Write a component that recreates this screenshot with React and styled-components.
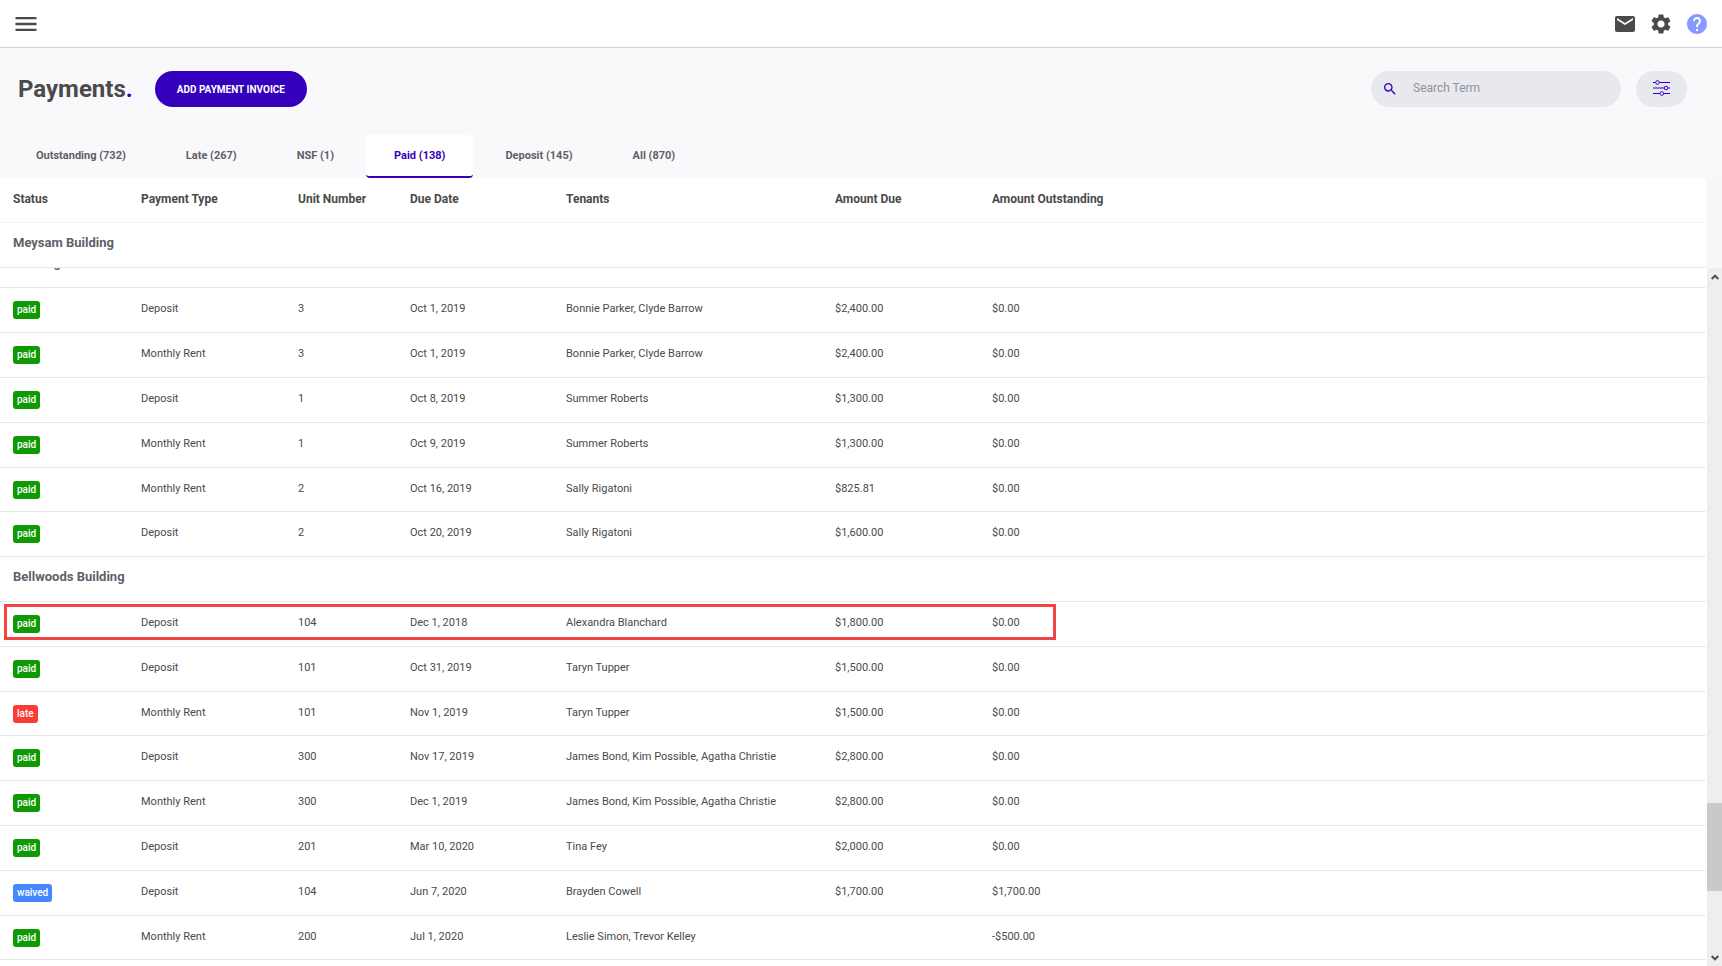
import React, { useLayoutEffect, useRef, useState } from "react";
import styled, { createGlobalStyle } from "styled-components";
import { MdMenu, MdEmail, MdSettings, MdHelp, MdSearch } from "react-icons/md";

const GlobalStyle = createGlobalStyle`
  *, *::before, *::after { box-sizing: border-box; }
  body {
    margin: 0;
    background: #fff;
    color: #4a4a4a;
    font-family: Roboto, "Liberation Sans", sans-serif;
    font-size: 11px;
  }
  button, input { font: inherit; color: inherit; }
`;

const Shell = styled.div`
  display: flex;
  flex-direction: column;
  height: 100vh;
  overflow: hidden;
`;

const TopBar = styled.header`
  display: flex;
  flex: none;
  align-items: center;
  justify-content: space-between;
  height: 48px;
  padding: 0 13px 0 12px;
  border-bottom: 1px solid #d0d0d0;
`;

const IconGroup = styled.div`
  display: flex;
  gap: 12px;
`;

const IconButton = styled.button`
  display: flex;
  padding: 0;
  border: 0;
  background: none;
  color: ${(p) => (p.$accent ? "#859cff" : "#4a4a4a")};
  cursor: pointer;
`;

const PageHead = styled.section`
  flex: none;
  background: #f9f9fc;
`;

const TitleRow = styled.div`
  display: flex;
  align-items: center;
  height: 87px;
  padding: 0 35px 5px 18px;
`;

const Title = styled.h1`
  margin: 0 22px 0 0;
  font-size: 24px;
  line-height: 28px;
  font-weight: 700;
`;

const Dot = styled.span`
  color: #3400bd;
`;

const AddButton = styled.button`
  height: 36px;
  padding: 0 22px;
  border: 0;
  border-radius: 18px;
  background: #3400bd;
  color: #fff;
  font-size: 10px;
  font-weight: 700;
  cursor: pointer;
`;

const SearchBox = styled.label`
  display: flex;
  align-items: center;
  gap: 15px;
  width: 250px;
  height: 36px;
  margin-left: auto;
  padding: 0 12px 0 11px;
  border-radius: 18px;
  background: #e8e9ee;
  color: #3400bd;
`;

const SearchInput = styled.input`
  flex: 1;
  min-width: 0;
  padding: 0 0 2px;
  border: 0;
  outline: 0;
  background: none;
  color: #4a4a4a;
  font-size: 12px;
  &::placeholder { color: #929297; opacity: 1; }
`;

const FilterButton = styled.button`
  display: flex;
  align-items: center;
  justify-content: center;
  width: 51px;
  height: 36px;
  margin-left: 15px;
  padding: 0 0 2px;
  border: 0;
  border-radius: 18px;
  background: #e8e9ee;
  color: #3400bd;
  cursor: pointer;
`;

const Tabs = styled.nav`
  display: flex;
  gap: 4px;
  padding-left: 8px;
`;

const Tab = styled.button`
  height: 43px;
  padding: 0 28px;
  border: 0;
  border-bottom: 2px solid ${(p) => (p.$active ? "#3400bd" : "transparent")};
  border-radius: 4px;
  background: ${(p) => (p.$active ? "#fff" : "transparent")};
  color: ${(p) => (p.$active ? "#3400bd" : "#5f5f68")};
  font-size: 11px;
  font-weight: 700;
  cursor: pointer;
`;

const HeadStrip = styled.div`
  flex: none;
  padding-right: 16px;
  background: #f7f7f7;
`;

const Body = styled.div`
  display: flex;
  flex: 1;
  min-height: 0;
`;

const ScrollPane = styled.div`
  flex: 1;
  min-width: 0;
  margin-right: 1px;
  padding-bottom: 40px;
  overflow: hidden;
`;

const Table = styled.table`
  width: 100%;
  table-layout: fixed;
  border-spacing: 0;
  background: #fff;
`;

const Col = styled.col`
  width: ${(p) => p.$width};
`;

const Row = styled.tr`
  position: relative;
  height: 45px;
  tbody > &:nth-child(5n + 6) { height: 44px; }
`;

const Cell = styled.td`
  padding: 0 0 2px 13px;
  border-bottom: 1px solid #e9e9e9;
  line-height: 16px;
  white-space: nowrap;
`;

const StatusCell = styled(Cell)`
  padding-bottom: 0;
`;

const HeadCell = styled.th`
  padding: 0 0 2px 13px;
  border-bottom: 1px solid #f3f3f8;
  font-size: 12px;
  font-weight: 700;
  line-height: 16px;
  text-align: left;
  white-space: nowrap;
`;

const GroupCell = styled.th`
  padding: 0 0 4px 13px;
  border-bottom: 1px solid #e9e9e9;
  color: #5f5f68;
  font-size: 13px;
  font-weight: 700;
  line-height: 18px;
  text-align: left;
`;

const badgeColors = { paid: "#0f9a04", late: "#fb3b36", waived: "#4488ff" };

const Badge = styled.span`
  display: inline-block;
  height: 18px;
  padding: 0 4px;
  border-radius: 3px;
  background: ${(p) => badgeColors[p.$status]};
  color: #fff;
  font-size: 10px;
  font-weight: 500;
  line-height: 18px;
  vertical-align: middle;
`;

const Outline = styled.span`
  position: absolute;
  top: 2px;
  left: 4px;
  width: 1052px;
  height: 36px;
  border: 3px solid #f24444;
  pointer-events: none;
`;

const Track = styled.div`
  display: flex;
  flex: none;
  flex-direction: column;
  width: 15px;
  background: #eee;
`;

const TrackArrow = styled.button`
  display: flex;
  align-items: center;
  justify-content: center;
  height: 17px;
  padding: 0;
  border: 0;
  background: none;
  color: #505050;
`;

const TrackSpace = styled.div`
  flex: ${(p) => p.$share} 1 0;
  background: ${(p) => (p.$thumb ? "#c9c9c9" : "transparent")};
`;

function SlidersIcon() {
  return (
    <svg width="17" height="18" viewBox="0 0 17 18" fill="none" stroke="currentColor" aria-hidden="true">
      <path d="M0 3.5H2.5M6.5 3.5H17M0 9H11M15 9H17M0 14.5H6.8M10.8 14.5H17" strokeWidth="1.2" />
      <circle cx="4.5" cy="3.5" r="1.8" />
      <circle cx="13" cy="9" r="1.8" />
      <circle cx="8.8" cy="14.5" r="1.8" />
    </svg>
  );
}

function Chevron({ up }) {
  return (
    <svg width="8" height="6" viewBox="0 0 8 6" fill="none" stroke="currentColor" strokeWidth="2" aria-hidden="true">
      <path d={up ? "M0.7 5 L4 1.7 L7.3 5" : "M0.7 1 L4 4.3 L7.3 1"} />
    </svg>
  );
}

const tabs = ["Outstanding (732)", "Late (267)", "NSF (1)", "Paid (138)", "Deposit (145)", "All (870)"];
const headings = ["Status", "Payment Type", "Unit Number", "Due Date", "Tenants", "Amount Due", "Amount Outstanding"];
const widths = ["128px", "157px", "112px", "156px", "269px", "157px", "auto"];

const rows = [
  { group: "Building" },
  ["paid", "Deposit", "3", "Oct 1, 2019", "Bonnie Parker, Clyde Barrow", "$2,400.00", "$0.00"],
  ["paid", "Monthly Rent", "3", "Oct 1, 2019", "Bonnie Parker, Clyde Barrow", "$2,400.00", "$0.00"],
  ["paid", "Deposit", "1", "Oct 8, 2019", "Summer Roberts", "$1,300.00", "$0.00"],
  ["paid", "Monthly Rent", "1", "Oct 9, 2019", "Summer Roberts", "$1,300.00", "$0.00"],
  ["paid", "Monthly Rent", "2", "Oct 16, 2019", "Sally Rigatoni", "$825.81", "$0.00"],
  ["paid", "Deposit", "2", "Oct 20, 2019", "Sally Rigatoni", "$1,600.00", "$0.00"],
  { group: "Bellwoods Building" },
  ["paid", "Deposit", "104", "Dec 1, 2018", "Alexandra Blanchard", "$1,800.00", "$0.00"],
  ["paid", "Deposit", "101", "Oct 31, 2019", "Taryn Tupper", "$1,500.00", "$0.00"],
  ["late", "Monthly Rent", "101", "Nov 1, 2019", "Taryn Tupper", "$1,500.00", "$0.00"],
  ["paid", "Deposit", "300", "Nov 17, 2019", "James Bond, Kim Possible, Agatha Christie", "$2,800.00", "$0.00"],
  ["paid", "Monthly Rent", "300", "Dec 1, 2019", "James Bond, Kim Possible, Agatha Christie", "$2,800.00", "$0.00"],
  ["paid", "Deposit", "201", "Mar 10, 2020", "Tina Fey", "$2,000.00", "$0.00"],
  ["waived", "Deposit", "104", "Jun 7, 2020", "Brayden Cowell", "$1,700.00", "$1,700.00"],
  ["paid", "Monthly Rent", "200", "Jul 1, 2020", "Leslie Simon, Trevor Kelley", "", "-$500.00"],
];
const highlighted = 8;

function Columns() {
  return (
    <colgroup>
      {widths.map((w, i) => <Col key={i} $width={w} />)}
    </colgroup>
  );
}

export default function App() {
  const pane = useRef(null);
  const [active, setActive] = useState(3);

  useLayoutEffect(() => {
    pane.current.scrollTop = 25;
  }, []);

  return (
    <Shell>
      <GlobalStyle />
      <TopBar>
        <IconButton aria-label="Menu"><MdMenu size={28} /></IconButton>
        <IconGroup>
          <IconButton aria-label="Messages"><MdEmail size={24} /></IconButton>
          <IconButton aria-label="Settings"><MdSettings size={24} /></IconButton>
          <IconButton $accent aria-label="Help"><MdHelp size={24} /></IconButton>
        </IconGroup>
      </TopBar>
      <PageHead>
        <TitleRow>
          <Title>Payments<Dot>.</Dot></Title>
          <AddButton>ADD PAYMENT INVOICE</AddButton>
          <SearchBox>
            <MdSearch size={16} />
            <SearchInput type="text" placeholder="Search Term" aria-label="Search Term" />
          </SearchBox>
          <FilterButton aria-label="Filters"><SlidersIcon /></FilterButton>
        </TitleRow>
        <Tabs>
          {tabs.map((t, i) => (
            <Tab key={t} $active={i === active} onClick={() => setActive(i)}>{t}</Tab>
          ))}
        </Tabs>
      </PageHead>
      <HeadStrip>
        <Table>
          <Columns />
          <thead>
            <Row>{headings.map((h) => <HeadCell key={h} scope="col">{h}</HeadCell>)}</Row>
            <Row><GroupCell colSpan={7} scope="colgroup">Meysam Building</GroupCell></Row>
          </thead>
        </Table>
      </HeadStrip>
      <Body>
        <ScrollPane ref={pane}>
          <Table aria-label="Payments">
            <Columns />
            <tbody>
              {rows.map((r, i) =>
                r.group ? (
                  <Row key={i}><GroupCell colSpan={7} scope="colgroup">{r.group}</GroupCell></Row>
                ) : (
                  <Row key={i}>
                    <StatusCell>
                      <Badge $status={r[0]}>{r[0]}</Badge>
                      {i === highlighted && <Outline />}
                    </StatusCell>
                    {r.slice(1).map((c, j) => <Cell key={j}>{c}</Cell>)}
                  </Row>
                )
              )}
            </tbody>
          </Table>
        </ScrollPane>
        <Track>
          <TrackArrow aria-label="Scroll up"><Chevron up /></TrackArrow>
          <TrackSpace $share={519} />
          <TrackSpace $share={88} $thumb />
          <TrackSpace $share={58} />
          <TrackArrow aria-label="Scroll down"><Chevron /></TrackArrow>
        </Track>
      </Body>
    </Shell>
  );
}
